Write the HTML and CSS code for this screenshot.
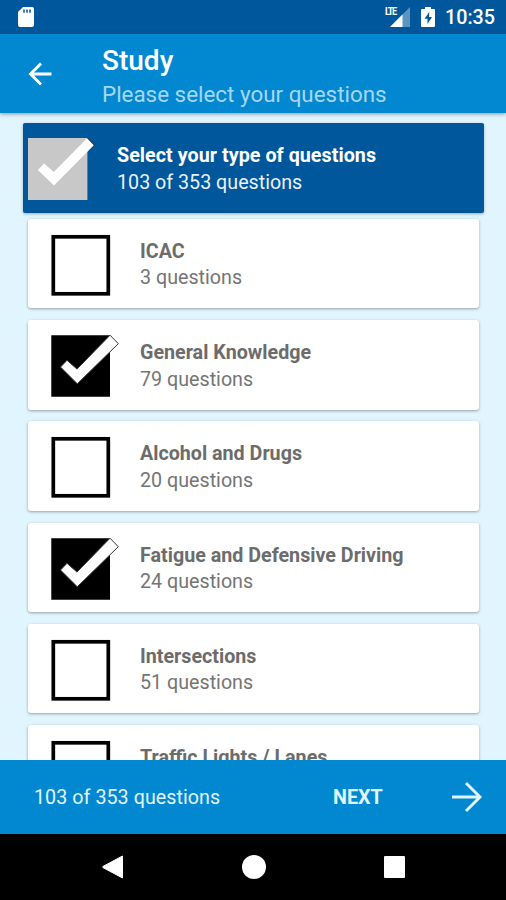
FILE: index.html
```
<!DOCTYPE html>
<html lang="en">
<head>
<meta charset="utf-8">
<title>Study</title>
<link rel="stylesheet" href="styles.css">
</head>
<body>
<svg class="defs" width="0" height="0">
  <symbol id="empty" viewBox="0 0 70 64"><rect x="3.3" y="3.8" width="55" height="57" fill="#fff" stroke="#000" stroke-width="3.7"/></symbol>
  <symbol id="checked" viewBox="0 0 70 64"><path d="M1.3 1.3h58.7v61.5H1.3z" fill="currentColor"/><path d="M10.5 33.1l6.5-6.8 10 8.8L60 1.2l8.3 8.5L27.3 49.8z" fill="#fff" stroke="#333" stroke-width="1"/></symbol>
  <symbol id="checked-light" viewBox="0 0 70 64"><path d="M1 2h59.4v62H1z" fill="#c8c8c8"/><path d="M60 1l8 8-6 6z" fill="#333"/><path d="M10.8 34l6.3-6.5 9.7 8.5L60 2.2l6.8 7L27 49.5z" fill="#fff"/></symbol>
</svg>
<div class="screen">
  <div class="status">
    <svg class="sd" width="18" height="22" viewBox="0 0 18 22"><path d="M6 1h9q2 0 2 2v16q0 2-2 2H3q-2 0-2-2V6z" fill="#fff"/><path d="M7 3.5v3.3M10 3.5v3.3M13 3.5v3.3" stroke="#01579b" stroke-width="1.5"/></svg>
    <div class="signal"><span class="lte">LTE</span><svg width="20" height="20" viewBox="0 0 20 20"><path d="M20 0v20H0z" fill="#5d94c1"/><path d="M12.5 7.5V20H0z" fill="#fff"/></svg></div>
    <svg class="battery" width="14" height="22" viewBox="0 0 14 22"><path d="M4 1h6v2h3q1 0 1 1v16q0 1-1 1H1q-1 0-1-1V4q0-1 1-1h3z" fill="#fff"/><path d="M8.3 6L3.5 12.8h3V18l4.5-7H8z" fill="#01579b"/></svg>
    <span class="clock">10:35</span>
  </div>
  <header class="appbar">
    <svg class="back" width="24" height="24" viewBox="0 0 24 24" fill="none" stroke="#fff" stroke-width="2.8"><path d="M23.5 12H3M13 1.5L2.5 12 13 22.5"/></svg>
    <div class="heading"><h1>Study</h1><p>Please select your questions</p></div>
  </header>
  <main class="list">
    <section class="summary">
      <svg class="box"><use href="#checked-light"/></svg>
      <div class="label"><b>Select your type of questions</b><span>103 of 353 questions</span></div>
    </section>
    <article class="card"><svg class="box"><use href="#empty"/></svg><div class="label"><b>ICAC</b><span>3 questions</span></div></article>
    <article class="card"><svg class="box"><use href="#checked"/></svg><div class="label"><b>General Knowledge</b><span>79 questions</span></div></article>
    <article class="card"><svg class="box"><use href="#empty"/></svg><div class="label"><b>Alcohol and Drugs</b><span>20 questions</span></div></article>
    <article class="card"><svg class="box"><use href="#checked"/></svg><div class="label"><b>Fatigue and Defensive Driving</b><span>24 questions</span></div></article>
    <article class="card"><svg class="box"><use href="#empty"/></svg><div class="label"><b>Intersections</b><span>51 questions</span></div></article>
    <article class="card"><svg class="box"><use href="#empty"/></svg><div class="label"><b>Traffic Lights / Lanes</b></div></article>
  </main>
  <footer class="footer">
    <span class="count">103 of 353 questions</span>
    <span class="next">NEXT</span>
    <svg width="32" height="32" viewBox="0 0 32 32" fill="none" stroke="#e1f5fe" stroke-width="2.9"><path d="M1 16h28M15 2l14 14-14 14"/></svg>
  </footer>
  <nav class="nav">
    <svg width="22" height="24" viewBox="0 0 22 24"><path d="M20.5 1v22L1 12.6q-1-.6 0-1.2z" fill="#fff" stroke="#fff" stroke-linejoin="round"/></svg>
    <i class="home"></i>
    <i class="recent"></i>
  </nav>
</div>
</body>
</html>
```
FILE: styles.css
```
* { box-sizing: border-box; }
body { margin: 0; font-family: Roboto, sans-serif; }
h1, p { margin: 0; }
.defs { display: block; }
.screen { width: 506px; height: 900px; display: flex; flex-direction: column; overflow: hidden; }
.status { height: 34px; flex: none; background: #01579b; display: flex; align-items: center; padding: 0 11px 0 17px; color: #fff; }
.signal { display: flex; margin-left: auto; height: 20px; position: relative; }
.lte { position: absolute; left: -5px; top: -1px; font-size: 11.5px; line-height: 11px; font-weight: 700; letter-spacing: -1.6px; padding-right: 2px; background: #01579b; transform: scaleX(.8); transform-origin: left; }
.battery { margin-left: 11px; }
.clock { margin-left: 10px; font-size: 19.7px; font-weight: 500; line-height: 24px; padding-top: 2px; }
.appbar { height: 79px; flex: none; background: #0288d1; display: flex; padding-left: 27px; position: relative; z-index: 1; box-shadow: 0 1px 4px rgba(0,0,0,.4); }
.back { margin: 28px 0 0 1px; }
.heading { margin-left: 50px; padding-top: 10px; }
.heading h1 { font-size: 28px; line-height: 34px; font-weight: 500; color: #fff; }
.heading p { font-size: 22.4px; line-height: 33px; color: #a5d7f5; }
.list { height: 647px; flex: none; overflow: hidden; background: #e1f5fe; padding: 10px 27px 0 28px; }
.box { width: 70px; height: 64px; flex: none; color: #000; }
.label { display: flex; flex-direction: column; font-size: 19.7px; line-height: 26.6px; }
.summary { height: 89.5px; margin: 0 -5px 6.2px; padding: 13px 0 0 4px; background: #01579b; color: #fff; border-radius: 2px; display: flex; box-shadow: 0 1px 3px rgba(0,0,0,.3); }
.summary .label { margin: 7px 0 0 20px; }
.summary b { font-weight: 700; letter-spacing: 0.05px; }
.summary span { color: #e9f1fb; }
.card { height: 89.6px; margin-bottom: 11.7px; padding: 14px 0 0 22px; background: #fff; border-radius: 3px; display: flex; box-shadow: 0 1px 3px rgba(0,0,0,.35); color: #757575; }
.card .label { margin: 6px 0 0 20px; }
.card b { font-weight: 700; color: #6c6c6c; }
.footer { height: 73.5px; flex: none; background: #0288d1; color: #e1f5fe; display: flex; align-items: center; padding: 0 23px 0 34px; font-size: 19.7px; }
.count { width: 299px; padding-top: 2px; letter-spacing: 0.05px; }
.next { font-weight: 700; margin-right: auto; padding-top: 2px; }
.nav { flex: 1; background: #000; display: flex; align-items: center; padding-left: 102px; }
.home { width: 24px; height: 24px; border-radius: 50%; background: #fff; margin-left: 118px; }
.recent { width: 21px; height: 22px; border-radius: 1px; background: #fff; margin-left: 118px; }
```
